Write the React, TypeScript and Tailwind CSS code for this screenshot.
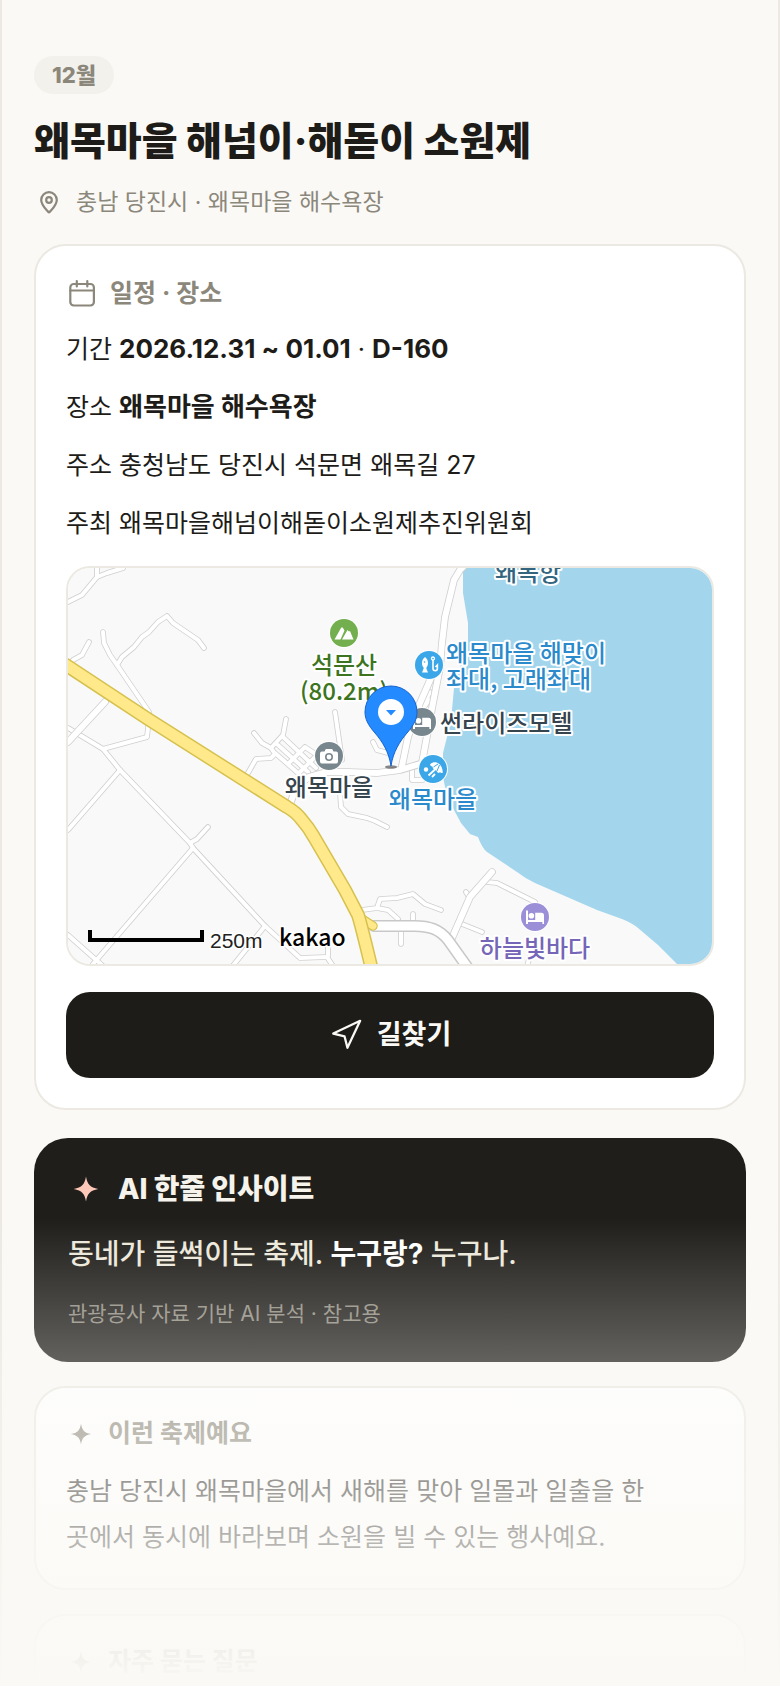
import { Navigation } from 'lucide-react';
import type { ReactNode } from 'react';

function Spark({ className }: { className: string }) {
  return (
    <svg viewBox="0 0 24 24" className={className} fill="currentColor" aria-hidden="true">
      <path d="M12 3.700c.9 5.200 2.600 7.300 8.200 8.300-5.600 1.100-7.300 3.100-8.200 8.300-.9-5.200-2.600-7.200-8.200-8.300 5.600-1 7.300-3.100 8.200-8.300z" />
    </svg>
  );
}

function PinIcon() {
  return (
    <svg viewBox="0 0 30 30" className="size-[30px]" fill="none" stroke="currentColor" strokeWidth="2.200" aria-hidden="true">
      <path d="M22.800 13c0 5-4.500 9-7.100 12q-.7.7-1.400 0C11.700 22 7.200 18 7.200 13a7.800 7.800 0 0 1 15.600 0z" />
      <circle cx="15" cy="13" r="2.800" />
    </svg>
  );
}

function CalendarIcon() {
  return (
    <svg viewBox="0 0 32 32" className="size-8" fill="none" stroke="currentColor" strokeWidth="2.200" strokeLinecap="round" aria-hidden="true">
      <rect x="4.300" y="6" width="23.600" height="21.500" rx="3.500" />
      <path d="M4.300 12.500H27.900M10.800 3V8.500M21.300 3V8.500" />
    </svg>
  );
}

const lanes = [
  'M0 34 14 27 29 9 39 5 55 0',
  'M29 0V9',
  'M35 64 36 75 42 87 49 97 81 144 80 160 79 169 35 181 0 160',
  'M49 97 54 89 66 79 74 69 81 64 90 54 99 48 105 55 130 72 136 80',
  'M5 92 14 87 21 74',
  'M35 181 52 202 122 275 125 280 197 358 232 390 259 389 265 398',
  'M260 388 260 373',
  'M52 202 0 262',
  'M122 275 129 271 140 259',
  'M125 280 25 396',
  'M0 367 35 398',
  'M197 358 163 400',
  'M180 205 188 191 203 190 207 186 203 180 194 175 186 165',
  'M203 180 215 167 218 151',
  'M215 169 248 200',
  'M210 177 240 204',
  'M207 185 231 206',
  'M221 195 237 179 246 185',
  'M231 205 247 189',
  'M267 144 274 192',
  'M305 174 309 182 320 185',
  'M272 225 273 239 280 246 299 250 307 253 319 259',
  'M294 342 309 340 320 342 330 351',
  'M309 340 312 331 329 330 345 326 357 336 373 342',
  'M345 346V354',
  'M333 364V376',
  'M419 314 429 315 467 334',
  'M398 324 401 329',
  'M394 356 414 364',
  'M459 398 462 388',
  'M344 198V212H355',
  'M362 124 355 138',
  'M361 132 351 146',
];
const streets = [
  'M0 174 37 134',
  'M222 236 229 218 241 209 259 204 279 204 309 205 332 202 352 196',
  'M396 -2 392 2 386 12 377 49 374 75 372 99 365 135 354 195',
  'M363 110 352 135 340 169 334 198',
  'M424 304 402 329 384 370',
];
const avenue = ['M306 358H342C362 357 372 362 380 372L400 400'];
const ramp = ['M291 349 305 358'];
const highway = ['M-8 93 80 151 219 239Q228 244 234 252 241 260 246 269L277 322 290 347Q293 356 304 402'];

function Road({ paths, outer, inner, edge, fill }: { paths: string[]; outer: number; inner: number; edge: string; fill: string }) {
  return (
    <g fill="none" strokeLinecap="round" strokeLinejoin="round">
      {paths.map((d) => (
        <path key={`edge-${d}`} d={d} stroke={edge} strokeWidth={outer} />
      ))}
      {paths.map((d) => (
        <path key={`fill-${d}`} d={d} stroke={fill} strokeWidth={inner} />
      ))}
    </g>
  );
}

function Poi({ x, y, color, children }: { x: number; y: number; color: string; children: ReactNode }) {
  return (
    <g transform={`translate(${x} ${y})`}>
      <circle r="15" fill="#fff" />
      <circle r="14" fill={color} />
      {children}
    </g>
  );
}

function Label({ x, y, color, anchor = 'middle', children }: { x: number; y: number; color: string; anchor?: 'start' | 'middle'; children: string }) {
  return (
    <text x={x} y={y} fill={color} textAnchor={anchor} stroke="#fff" strokeWidth="4" strokeLinejoin="round" paintOrder="stroke">
      {children}
    </text>
  );
}

function Bed() {
  return (
    <g fill="none" stroke="#fff">
      <path d="M-8-6.500V7" strokeWidth="2" />
      <path d="M-8 4H9" strokeWidth="2" />
      <path d="M.2-4.300H6.500A2.500 2.500 0 0 1 9-1.800V7H7.400V4H.2Z" fill="#fff" stroke="none" />
      <circle cx="-3.600" cy="-1.300" r="2.800" fill="#fff" stroke="none" />
    </g>
  );
}

function FestivalMap() {
  return (
    <svg
      viewBox="0 0 644 396"
      preserveAspectRatio="xMidYMid slice"
      className="block h-[396px] w-full font-['Noto_Sans_CJK_KR',sans-serif] text-[24px] font-medium"
      role="img"
      aria-label="왜목마을 해수욕장 지도"
    >
      <rect width="644" height="396" fill="#f9f9f9" />
      <path d="M395 0V25L400 55V80L393 96 386 120 384 142 380 165 375 185V209L379 228 386 242 393 255 402 266 410 269Q414 280 419 284L449 304Q458 311 467 315L529 342 554 351Q564 355 570 360L590 377 609 396H644V0Z" fill="#a3d6ec" />
      <Road paths={lanes} outer={5.6} inner={4} edge="#cfcfcf" fill="#fff" />
      <Road paths={streets} outer={7.6} inner={6} edge="#cfcfcf" fill="#fff" />
      <Road paths={avenue} outer={12} inner={9} edge="#c8c8c8" fill="#fff" />
      <Road paths={ramp} outer={9.5} inner={7} edge="#d6c14f" fill="#ffe98a" />
      <Road paths={highway} outer={14} inner={11} edge="#d6c14f" fill="#ffe98a" />

      <Label x={460} y={13} color="#33657f">왜목항</Label>

      <Poi x={276} y={65} color="#73ae4f">
        <path d="M-9.500 6.500-3-5Q-2-6.500-1-5L.5-2.500-3.500 6.500ZM-2 6.500 3.500-3 5-1.500 6-2 9.500 6.500Z" fill="#fff" />
      </Poi>
      <Label x={276} y={106} color="#3c7420">석문산</Label>
      <Label x={276} y={132} color="#3c7420">(80.2m)</Label>

      <Poi x={261} y={188} color="#78878e">
        <path d="M-7-4.500H-4.500L-3.200-7H3.200L4.500-4.500H7A2 2 0 0 1 9-2.500V5.500A2 2 0 0 1 7 7.500H-7A2 2 0 0 1-9 5.500V-2.500A2 2 0 0 1-7-4.500Z" fill="#fff" />
        <circle cy="1" r="3.200" fill="#fff" stroke="#78878e" strokeWidth="1.600" />
      </Poi>
      <Label x={261} y={228} color="#36444e">왜목마을</Label>

      <Poi x={361} y={97} color="#3ba7e8">
        <path d="M-4-8C-.2-5-.2 0-2.800 3L-1 7.500H-7L-5.200 3C-7.800 0-7.800-5-4-8Z" fill="#fff" />
        <circle cx="-4.500" cy="-3" r=".8" fill="#3ba7e8" />
        <path d="M4-5V3.500a2.200 2.200 0 0 0 4.400 0V0L6.500 2" fill="none" stroke="#fff" strokeWidth="1.600" />
        <circle cx="4" cy="-6.500" r="1.500" fill="none" stroke="#fff" strokeWidth="1.300" />
      </Poi>
      <Label x={378} y={94} color="#2b8acb" anchor="start">왜목마을 해맞이</Label>
      <Label x={378} y={120} color="#2b8acb" anchor="start">좌대, 고래좌대</Label>

      <Poi x={354} y={154} color="#78878e"><Bed /></Poi>
      <Label x={372} y={164} color="#36444e" anchor="start">썬라이즈모텔</Label>

      <Poi x={365} y={201} color="#3ba7e8">
        <path d="M-3-4.500C1-9 9.500-6.500 9.800 3.500 8.500 4.500 7.500 4 7 3 6 4.500 4.500 4 4 2.500L1.500 0C0 0-.5-1-.2-2.200-1.500-2.500-2.500-3-3-4.500Z" fill="#fff" />
        <path d="M.5-2 5-5M4 2 6.500-4" stroke="#3ba7e8" strokeWidth="1" />
        <path d="M2.500 0-4.500 6.500M-1 8 2 5" stroke="#fff" strokeWidth="1.800" />
        <circle cx="-7" cy=".5" r="2.200" fill="#fff" />
      </Poi>
      <Label x={365} y={240} color="#2b8acb">왜목마을</Label>

      <Poi x={467} y={349} color="#9b8fd8"><Bed /></Poi>
      <Label x={467} y={389} color="#7566b8">하늘빛바다</Label>

      <ellipse cx="323" cy="199" rx="6" ry="1.800" fill="#555" opacity=".7" />
      <path d="M323 198C321 184 314 173 307 165 300 157 297 151 297 144A26 26 0 0 1 349 144C349 151 346 157 339 165 332 173 325 184 323 198Z" fill="#238bff" stroke="#1763cf" />
      <circle cx="323" cy="144" r="13" fill="#fff" />
      <path d="M318 142H328L323 147.500Z" fill="#238bff" />

      <path d="M22 362V372H134V362" fill="none" stroke="#000" strokeWidth="4" />
      <text x="142" y="380" className="font-['Liberation_Sans',sans-serif] text-[21px] font-normal" fill="#222" stroke="#fff" strokeWidth="3" paintOrder="stroke">250m</text>
      <text x="211" y="378" className="text-[23px]" fill="#000" stroke="#fff" strokeWidth="3" paintOrder="stroke">kakao</text>
    </svg>
  );
}

function NoteHeading({ children }: { children: string }) {
  return (
    <h2 className="flex h-8 items-center gap-3 text-[25px] font-bold text-[#8b877b]">
      <Spark className="size-[30px]" />
      {children}
    </h2>
  );
}

export default function App() {
  return (
    <div className="relative h-[calc(100vh-2px)] overflow-hidden font-['Inter','Noto_Sans_CJK_KR',sans-serif] break-keep text-[#1d1c18]">
      <main className="min-h-full border-x-2 border-[#ebe9e2] bg-[#faf9f5] px-8 pt-14">
        <header>
          <p className="flex h-[38px] w-fit items-center rounded-full bg-[#f2f1ec] px-[18px] text-[22px] font-extrabold text-[#8b877b]">12월</p>
          <h1 className="mt-5 text-[39px] leading-[54px] font-extrabold">왜목마을 해넘이·해돋이 소원제</h1>
          <p className="mt-4 flex h-9 items-center gap-3 text-[23px] text-[#8b877b]">
            <PinIcon />
            충남 당진시 · 왜목마을 해수욕장
          </p>
        </header>

        <section className="mt-6 rounded-[32px] border-2 border-[#ebe9e2] bg-white p-[30px]">
          <h2 className="flex h-9 items-center gap-3 text-[25px] font-bold text-[#8b877b]">
            <CalendarIcon />
            일정 · 장소
          </h2>
          <div className="mt-2 text-[25px] leading-[58px]">
            <p>기간 <b className="text-[26px] font-bold">2026.12.31 ~ 01.01</b> · <b className="text-[26px] font-bold">D-160</b></p>
            <p>장소 <b className="text-[26px] font-bold">왜목마을 해수욕장</b></p>
            <p>주소 충청남도 당진시 석문면 왜목길 27</p>
            <p>주최 왜목마을해넘이해돋이소원제추진위원회</p>
          </div>
          <div className="mt-[14px] overflow-hidden rounded-[24px] border-2 border-[#ebe9e2]">
            <FestivalMap />
          </div>
          <button type="button" className="mt-[26px] flex h-[86px] w-full items-center justify-center gap-[14px] rounded-[24px] bg-[#1d1c18] text-[27px] font-bold text-[#faf9f5]">
            <Navigation size={34} strokeWidth={1.6} />
            길찾기
          </button>
        </section>

        <section className="mt-7 rounded-[34px] bg-[#1f1e1a] px-[34px] pt-8 pb-[34px]">
          <h2 className="flex h-[38px] items-center gap-[14px] text-[28px] font-extrabold text-[#f5f3ec]">
            <Spark className="size-9 text-[#ffc8b8]" />
            AI 한줄 인사이트
          </h2>
          <p className="mt-6 text-[28px] leading-[44px] font-medium text-[#ece8db]">
            동네가 들썩이는 축제. <b className="font-bold text-white">누구랑?</b> 누구나.
          </p>
          <p className="mt-6 text-[21px] leading-[28px] text-[#8f8b80]">관광공사 자료 기반 AI 분석 · 참고용</p>
        </section>

        <section className="mt-6 rounded-[32px] border-2 border-[#ebe9e2] bg-white px-[30px] pt-[30px] pb-7">
          <NoteHeading>이런 축제예요</NoteHeading>
          <p className="mt-[18px] text-[25px] leading-[46px]">충남 당진시 왜목마을에서 새해를 맞아 일몰과 일출을 한 곳에서 동시에 바라보며 소원을 빌 수 있는 행사예요.</p>
        </section>

        <section className="mt-6 rounded-[32px] border-2 border-[#ebe9e2] bg-white px-[30px] pt-[30px] pb-7">
          <NoteHeading>자주 묻는 질문</NoteHeading>
        </section>
      </main>
      <div className="pointer-events-none absolute inset-x-0 bottom-0 h-[468px] bg-linear-to-b from-[#faf9f5]/0 to-[#faf9f5]" />
    </div>
  );
}
